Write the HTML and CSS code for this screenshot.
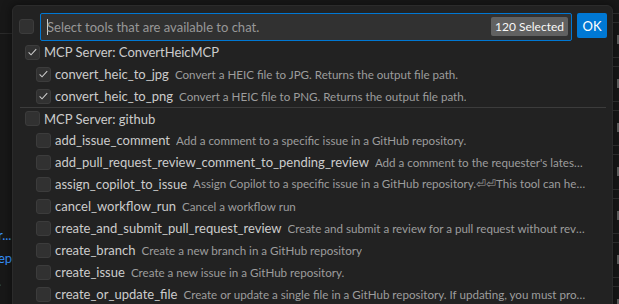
FILE: index.html
```html
<!DOCTYPE html>
<html lang="en">
<head>
  <meta charset="UTF-8" />
  <title>Select tools</title>
  <link rel="stylesheet" href="styles.css">
</head>
<body>
  <div class="side left">
    <div class="rule"></div>
    <div class="link l1">r...</div>
    <div class="link l2">epo</div>
    <div class="link l3">.</div>
  </div>

  <div class="picker">
    <div class="head">
      <span class="box"></span>
      <div class="input">
        <span class="caret"></span>
        <span class="placeholder">Select tools that are available to chat.</span>
        <span class="badge">120 Selected</span>
      </div>
      <button class="ok">OK</button>
    </div>
    <div class="list" id="list"></div>
  </div>

  <div class="side right" id="right"></div>

  <script>
    const groups = [
      { name: "MCP Server: ConvertHeicMCP", checked: true, tools: [
        ["convert_heic_to_jpg", "Convert a HEIC file to JPG. Returns the output file path.", true],
        ["convert_heic_to_png", "Convert a HEIC file to PNG. Returns the output file path.", true]
      ]},
      { name: "MCP Server: github", checked: false, tools: [
        ["add_issue_comment", "Add a comment to a specific issue in a GitHub repository."],
        ["add_pull_request_review_comment_to_pending_review", "Add a comment to the requester's latest pending pull request review."],
        ["assign_copilot_to_issue", "Assign Copilot to a specific issue in a GitHub repository.\u23CE\u23CEThis tool can help with this."],
        ["cancel_workflow_run", "Cancel a workflow run"],
        ["create_and_submit_pull_request_review", "Create and submit a review for a pull request without review comments."],
        ["create_branch", "Create a new branch in a GitHub repository"],
        ["create_issue", "Create a new issue in a GitHub repository."],
        ["create_or_update_file", "Create or update a single file in a GitHub repository. If updating, you must provide the SHA."]
      ]}
    ];

    const tick = '<svg viewBox="0 0 16 16" width="14" height="14"><path d="M3.2 8.4l3 3 6.4-7" fill="none" stroke="#cccccc" stroke-width="1.3"/></svg>';
    const list = document.getElementById("list");
    groups.forEach((g, i) => {
      const row = document.createElement("div");
      row.className = "row group" + (i > 0 ? " sep" : "");
      row.innerHTML = `<span class="box">${g.checked ? tick : ""}</span><span class="label">${g.name}</span>`;
      list.appendChild(row);
      g.tools.forEach(t => {
        const r = document.createElement("div");
        r.className = "row tool";
        r.innerHTML = `<span class="box">${t[2] ? tick : ""}</span><span class="label">${t[0]}</span><span class="desc">${t[1]}</span>`;
        list.appendChild(r);
      });
    });

    const right = document.getElementById("right");
    for (let i = 0; i < 7; i++) {
      const u = document.createElement("div");
      u.className = "unit";
      u.innerHTML = '<div class="mark"></div>';
      right.appendChild(u);
    }
  </script>
</body>
</html>
```

FILE: styles.css
```css
body {
  margin: 0;
  width: 619px;
  height: 304px;
  overflow: hidden;
  display: flex;
  background: #181818;
  font-family: 'Lato', 'Noto Sans', sans-serif;
  font-size: 13px;
  color: #cccccc;
}
.side { flex: none; overflow: hidden; }
.left { width: 12px; }
.left .rule { height: 1px; background: #2b2b2b; margin-top: 33px; }
.link {
  color: #3794ff;
  font-size: 13px;
  line-height: 23px;
  white-space: nowrap;
}
.l1 { margin-top: 190px; margin-left: -2px; }
.l2 { margin-left: -2px; }
.l3 { margin-left: -2px; }
.right { width: 6px; padding-top: 13px; }
.unit {
  height: 44px;
  box-sizing: border-box;
  border-top: 1px solid #2b2b2b;
}
.unit::before {
  content: "";
  display: block;
  height: 1px;
  margin-top: 8px;
  background: #2b2b2b;
}
.unit .mark {
  width: 2px;
  height: 9px;
  margin: 12px 0 0 4px;
  background: #5a5a5a;
}

.picker {
  flex: none;
  width: 601px;
  height: 320px;
  margin-top: 5px;
  box-sizing: border-box;
  background: #222222;
  border: 1px solid #2b2b2b;
  border-radius: 6px;
  box-shadow: 0 0 8px 2px rgba(0,0,0,0.36);
  overflow: hidden;
}
.head {
  display: flex;
  align-items: center;
  gap: 5px;
  padding: 6px 5px 0 6px;
  height: 29px;
}
.head .box { margin-right: 1px; }
.box {
  flex: none;
  width: 13px;
  height: 13px;
  border: 1px solid #3c3c3c;
  border-radius: 3px;
  background: #313131;
  display: flex;
  align-items: center;
  justify-content: center;
}
.input {
  flex: 1;
  height: 28px;
  box-sizing: border-box;
  display: flex;
  align-items: center;
  background: #313131;
  border: 1px solid #0078d4;
  border-radius: 2px;
  padding: 0 3px 0 6px;
}
.caret { width: 1px; height: 16px; background: #cccccc; margin-right: -1px; }
.placeholder { flex: 1; color: #989898; }
.badge {
  background: #616161;
  color: #f8f8f8;
  font-size: 12px;
  line-height: 19px;
  padding: 0 4px;
  border-radius: 2px;
}
.ok {
  flex: none;
  width: 30px;
  height: 25px;
  margin-top: -2px;
  border: none;
  border-radius: 2px;
  background: #0078d4;
  color: #ffffff;
  font-family: inherit;
  font-size: 13px;
  padding: 0;
}
.row {
  display: flex;
  align-items: center;
  height: 22px;
  box-sizing: border-box;
  white-space: nowrap;
  margin-right: 6px;
}
.group { padding-left: 12px; }
.group.sep { border-top: 1px solid #3c3c3c; margin-left: 7px; padding-left: 5px; }
.tool { padding-left: 23px; }
.row .box { margin-right: 4px; }
.label { flex: none; }
.desc {
  color: #9d9d9d;
  font-size: 11.6px;
  margin-left: 6px;
  overflow: hidden;
  text-overflow: ellipsis;
  margin-right: 20px;
}
```
